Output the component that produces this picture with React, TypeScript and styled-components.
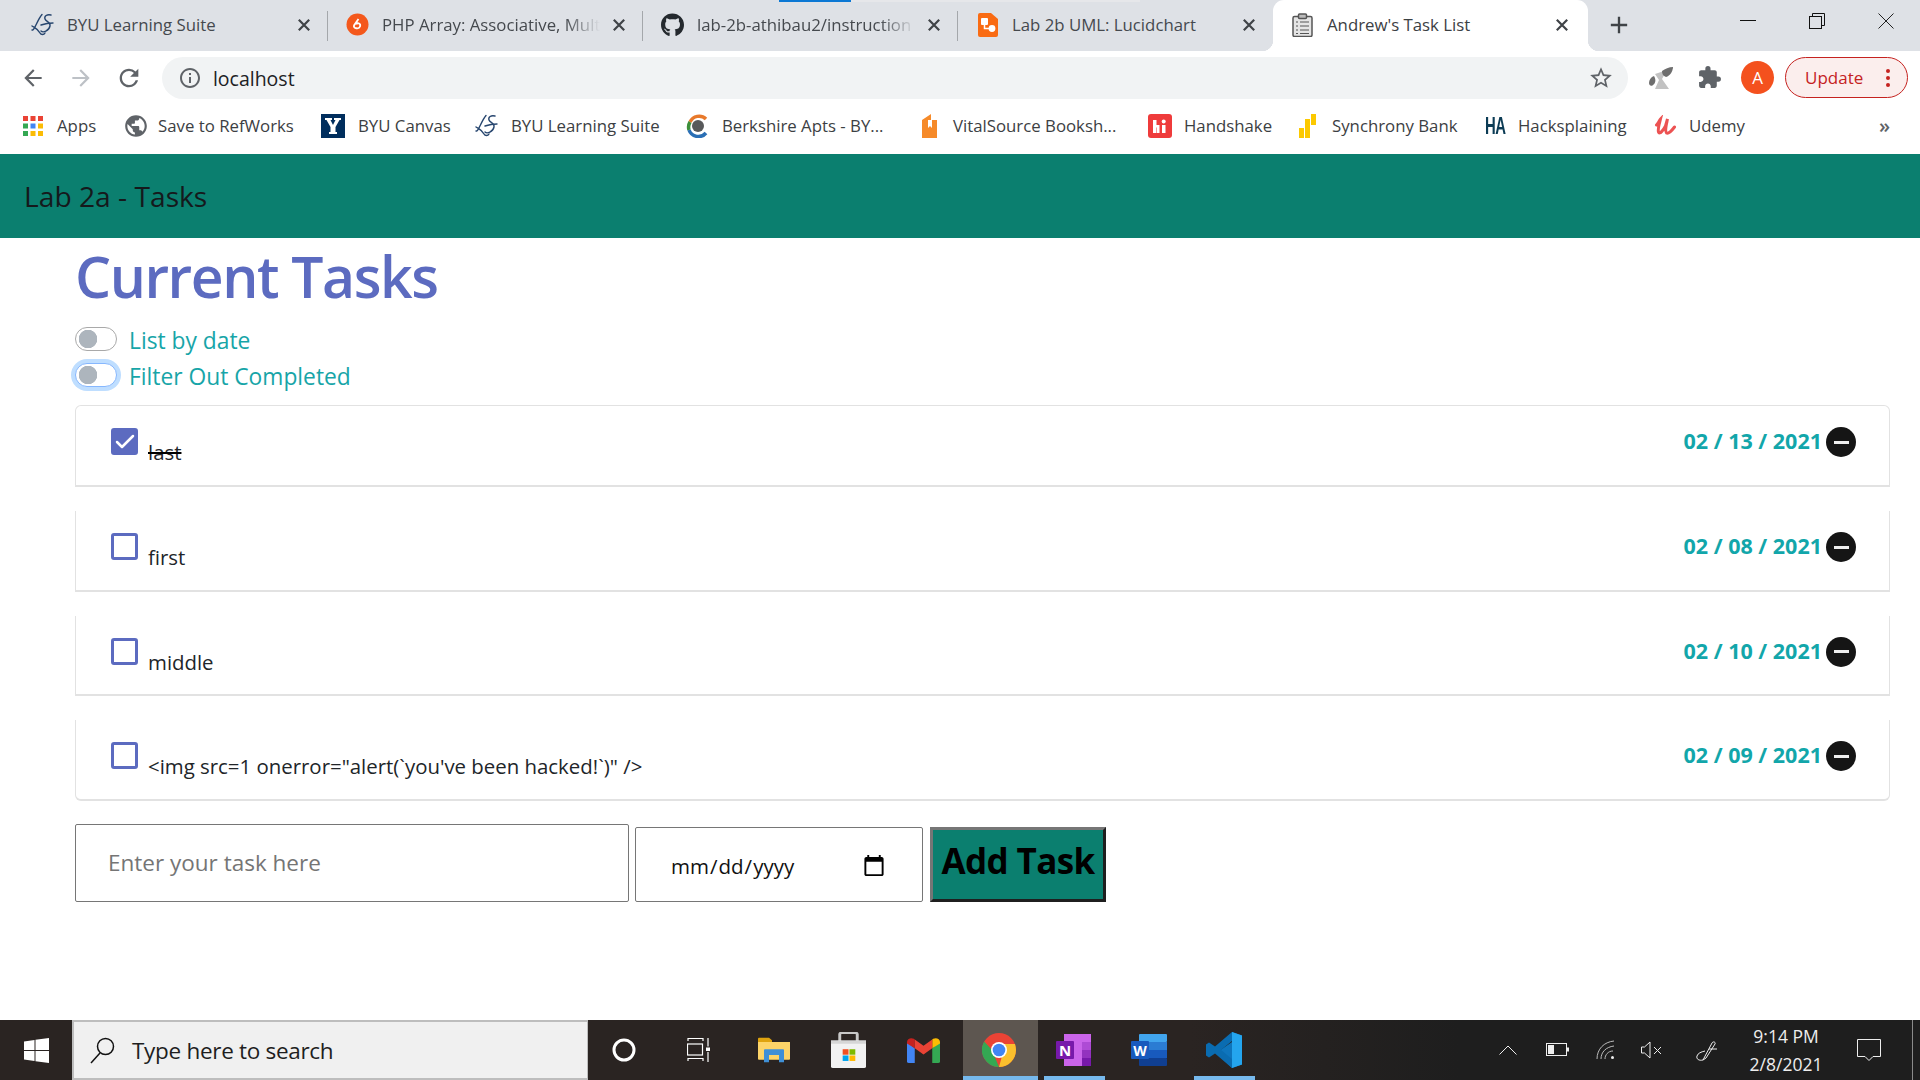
import React, { FC, ReactNode } from 'react';
import styled, { createGlobalStyle } from 'styled-components';
import { Check } from 'lucide-react';
import { FaGithub } from 'react-icons/fa';
import {
  MdAdd,
  MdArrowBack,
  MdArrowForward,
  MdExtension,
  MdInfoOutline,
  MdPublic,
  MdRefresh,
  MdStarBorder,
} from 'react-icons/md';

const uiFont = `"Open Sans", "Noto Sans", "Liberation Sans", sans-serif`;

const GlobalStyle = createGlobalStyle`
  html, body {
    margin: 0;
    padding: 0;
    background: #fff;
    font-family: ${uiFont};
  }
  * {
    box-sizing: border-box;
  }
`;

const Page = styled.div`
  position: relative;
  width: 1920px;
  height: 1080px;
  overflow: hidden;
  display: flex;
  flex-direction: column;
`;

/* ---------- browser chrome ---------- */

const TabStrip = styled.div`
  height: 51px;
  flex: none;
  display: flex;
  align-items: stretch;
  padding-left: 13px;
  background: #dee1e6;
`;

const LoadBar = styled.div`
  position: absolute;
  top: 0;
  left: 779px;
  width: 361px;
  height: 2px;
  background: linear-gradient(90deg, #0b78d4 0, #0b78d4 72px, #e6e7ea 72px, #e6e7ea 100%);
`;

const Tab = styled.div<{ $active?: boolean; $divider?: boolean }>`
  position: relative;
  width: 315px;
  display: flex;
  align-items: center;
  gap: 13px;
  padding: 0 ${(p) => (p.$active ? 20 : 18)}px 2px 18px;
  font-size: 16.8px;
  color: ${(p) => (p.$active ? '#3c4043' : '#45494e')};
  background: ${(p) => (p.$active ? '#fff' : 'transparent')};
  border-radius: ${(p) => (p.$active ? '11px 11px 0 0' : '0')};

  &::after {
    content: '';
    display: ${(p) => (p.$divider ? 'block' : 'none')};
    position: absolute;
    right: 0;
    top: 11px;
    width: 1px;
    height: 30px;
    background: #a4a7ab;
  }

  ${(p) =>
    p.$active &&
    `
    &::before {
      content: '';
      position: absolute;
      left: -11px;
      right: -11px;
      bottom: 0;
      height: 11px;
      background:
        radial-gradient(circle at 0 0, #dee1e6 11px, #fff 11.5px) left bottom / 11px 11px no-repeat,
        radial-gradient(circle at 100% 0, #dee1e6 11px, #fff 11.5px) right bottom / 11px 11px no-repeat;
    }
  `}
`;

const TabIcon = styled.span`
  width: 23px;
  height: 24px;
  flex: none;
  display: flex;
  align-items: center;
  justify-content: center;
`;

const TabTitle = styled.span<{ $fade?: boolean }>`
  flex: 1;
  min-width: 0;
  white-space: nowrap;
  overflow: hidden;
  ${(p) =>
    p.$fade &&
    `-webkit-mask-image: linear-gradient(90deg, #000 84%, transparent 100%);
     mask-image: linear-gradient(90deg, #000 84%, transparent 100%);`}
`;

const TabClose = styled.span`
  flex: none;
  display: flex;
`;

const NewTab = styled.span`
  margin-left: 14px;
  width: 34px;
  display: flex;
  align-items: center;
  justify-content: center;
  padding-bottom: 2px;
  color: #3f4347;
`;

const WindowControls = styled.div`
  margin-left: auto;
  display: flex;
`;

const WindowButton = styled.span`
  width: 69px;
  height: 42px;
  display: flex;
  align-items: center;
  justify-content: center;
`;

const Toolbar = styled.div`
  height: 51px;
  flex: none;
  display: flex;
  align-items: center;
  padding: 2px 12px 0 9px;
  background: #fff;
`;

const NavButton = styled.span<{ $dim?: boolean }>`
  width: 48px;
  display: flex;
  justify-content: center;
  color: ${(p) => (p.$dim ? '#bdc1c6' : '#5f6368')};
`;

const AddressBar = styled.div`
  margin-left: 9px;
  width: 1467px;
  height: 42px;
  display: flex;
  align-items: center;
  gap: 11px;
  padding: 0 14px 0 16px;
  border-radius: 21px;
  background: #f1f3f4;
  color: #5f6368;
`;

const AddressText = styled.span`
  flex: 1;
  padding-top: 2px;
  font-size: 19.5px;
  color: #202124;
`;

const ToolIcon = styled.span<{ $gap: number }>`
  width: 48px;
  margin-left: ${(p) => p.$gap}px;
  display: flex;
  justify-content: center;
  color: #5f6368;
`;

const Avatar = styled.span`
  width: 33px;
  height: 33px;
  margin-left: 8px;
  flex: none;
  display: flex;
  align-items: center;
  justify-content: center;
  border-radius: 50%;
  background: #f4511e;
  color: #fff;
  font-size: 17px;
`;

const UpdatePill = styled.div`
  margin-left: 11px;
  width: 123px;
  height: 41px;
  display: flex;
  align-items: center;
  justify-content: space-between;
  padding: 0 17px 0 19px;
  border: 1.5px solid #c5221f;
  border-radius: 21px;
  background: #fbeeed;
  color: #c5221f;
  font-size: 17px;
`;

const Dots = styled.span`
  width: 4px;
  height: 4px;
  border-radius: 50%;
  background: #c5221f;
  box-shadow: 0 -7px 0 #c5221f, 0 7px 0 #c5221f;
`;

const BookmarkBar = styled.div`
  height: 52px;
  flex: none;
  display: flex;
  align-items: center;
  padding: 0 0 5px 23px;
  background: #fff;
  font-size: 16.8px;
  color: #3c4043;
`;

const Bookmark = styled.div<{ $width: number }>`
  width: ${(p) => p.$width}px;
  flex: none;
  display: flex;
  align-items: center;
  white-space: nowrap;
`;

const BookmarkIcon = styled.span<{ $width: number }>`
  width: ${(p) => p.$width}px;
  flex: none;
  display: flex;
  align-items: center;
`;

const HackLogo = styled.span`
  font-family: "Liberation Sans", sans-serif;
  font-weight: 700;
  font-size: 24px;
  line-height: 24px;
  letter-spacing: -1px;
  transform: scaleX(0.62);
  transform-origin: left center;
  color: #0c3c55;
`;

const MoreBookmarks = styled.span`
  margin-left: 124px;
  color: #5f6368;
  font-size: 20px;
  font-weight: 600;
`;

/* ---------- the app itself ---------- */

const NavBar = styled.div`
  height: 84px;
  flex: none;
  display: flex;
  align-items: center;
  padding-left: 24px;
  background: #0b7f6f;
  color: #15191c;
  font-size: 28.2px;
`;

const Main = styled.main`
  flex: 1;
  min-height: 0;
  padding: 0 30px 0 75px;
`;

const Heading = styled.h1`
  margin: 0 0 8px;
  font-size: 57px;
  line-height: 76px;
  font-weight: 600;
  letter-spacing: -1.45px;
  color: #5c6bc0;
`;

const SwitchRow = styled.label`
  height: 36px;
  display: flex;
  align-items: center;
  gap: 12px;
  font-size: 22.8px;
  color: #17a5a8;
`;

const Switch = styled.input.attrs({ type: 'checkbox' })<{ $focused?: boolean }>`
  appearance: none;
  width: 42px;
  height: 24px;
  margin: 0 0 2px;
  flex: none;
  border: 1px solid ${(p) => (p.$focused ? '#86b7fe' : '#a9a9a9')};
  border-radius: 12px;
  background: radial-gradient(circle at 12px 50%, #adb5bd 9px, transparent 9.5px) #fff;
  box-shadow: ${(p) => (p.$focused ? '0 0 0 4px #bfdeff' : 'none')};
`;

const TaskList = styled.div`
  margin-top: 11px;
`;

const TaskCard = styled.div<{ $first?: boolean; $last?: boolean }>`
  height: ${(p) => (p.$first ? 82 : 80.67)}px;
  margin-top: ${(p) => (p.$first ? 0 : 24)}px;
  display: flex;
  align-items: flex-start;
  justify-content: space-between;
  padding: 22px 33px 0 35px;
  border: 1px solid #e2e2e2;
  border-top-width: ${(p) => (p.$first ? 1 : 0)}px;
  border-bottom-width: 2px;
  border-radius: ${(p) => (p.$first ? '6px 6px 0 0' : p.$last ? '0 0 6px 6px' : '0')};
`;

const TaskMain = styled.div`
  display: flex;
  align-items: flex-start;
`;

const CheckBox = styled.span<{ $checked?: boolean }>`
  width: 27px;
  height: 27px;
  flex: none;
  display: flex;
  align-items: center;
  justify-content: center;
  border: 3px solid #5c6bc0;
  border-radius: 3px;
  background: ${(p) => (p.$checked ? '#5c6bc0' : '#fff')};
  color: #fff;

  svg {
    flex: none;
  }
`;

const TaskText = styled.span<{ $done?: boolean }>`
  margin: 9px 0 0 10px;
  font-size: 20.4px;
  line-height: 30px;
  color: #212529;
  text-decoration: ${(p) => (p.$done ? 'line-through #000 1.5px' : 'none')};
`;

const TaskMeta = styled.div`
  margin-top: -1px;
  display: flex;
  align-items: flex-start;
  gap: 4px;
`;

const TaskDate = styled.span`
  font-size: 21.5px;
  line-height: 28px;
  font-weight: 700;
  color: #12a6aa;
`;

const RemoveButton = styled.span`
  width: 30px;
  height: 30px;
  display: flex;
  align-items: center;
  justify-content: center;
  border-radius: 50%;
  background: #151515;

  &::after {
    content: '';
    width: 15px;
    height: 3px;
    background: #eee;
  }
`;

const AddForm = styled.form`
  margin-top: 23px;
  display: flex;
  align-items: flex-end;
  gap: 6px;
`;

const TaskInput = styled.input`
  width: 554px;
  height: 78px;
  padding: 0 32px;
  border: 1px solid #767676;
  border-radius: 2px;
  font-family: ${uiFont};
  font-size: 22.5px;

  &::placeholder {
    color: #757575;
    opacity: 1;
  }
`;

const DateInput = styled.input`
  width: 288px;
  height: 75px;
  padding: 4px 36px 0 34px;
  border: 1px solid #767676;
  border-radius: 2px;
  background: #fff;
  font-family: ${uiFont};
  font-size: 20.5px;
  color: #111;

  &::-webkit-calendar-picker-indicator {
    width: 24px;
    height: 24px;
    padding: 0;
    margin: 0;
  }
`;

const AddButton = styled.button`
  width: 176px;
  height: 75px;
  margin-left: 1px;
  padding: 0 0 8px;
  border: 3px solid;
  border-color: #767676 #1f1f1f #1f1f1f #767676;
  background: #0b7f6f;
  color: #000;
  font-family: ${uiFont};
  font-size: 35px;
  font-weight: 700;
  letter-spacing: -0.6px;
  white-space: nowrap;
`;

/* ---------- windows taskbar ---------- */

const Taskbar = styled.footer`
  height: 60px;
  flex: none;
  display: flex;
  align-items: stretch;
  background: linear-gradient(90deg, #2a2422 0, #2a2422 62%, #1e1e1e 76%, #1e1e1e 100%);
`;

const StartButton = styled.div`
  width: 72px;
  flex: none;
  display: flex;
  align-items: center;
  justify-content: center;
`;

const SearchBox = styled.div`
  width: 516px;
  flex: none;
  display: flex;
  align-items: center;
  gap: 17px;
  padding-left: 16px;
  border: 2px solid #bdbdbd;
  border-right-width: 1px;
  background: #f0f0f0;
  color: #1e1e1e;
  font-size: 22.5px;
  letter-spacing: -0.3px;
`;

const TaskSlot = styled.div<{ $active?: boolean; $bar?: 'full' | 'inset' }>`
  position: relative;
  width: 75px;
  flex: none;
  display: flex;
  align-items: center;
  justify-content: center;
  padding-right: 4px;
  background: ${(p) => (p.$active ? '#5d5650' : 'transparent')};

  &::after {
    content: '';
    display: ${(p) => (p.$bar ? 'block' : 'none')};
    position: absolute;
    bottom: 0;
    left: ${(p) => (p.$bar === 'inset' ? 6 : 0)}px;
    right: ${(p) => (p.$bar === 'inset' ? 8 : 0)}px;
    height: 4px;
    background: #76b9ed;
  }
`;

const Tray = styled.div`
  margin-left: auto;
  display: flex;
  align-items: center;
  color: #eee;
`;

const TrayIcon = styled.span<{ $width: number }>`
  width: ${(p) => p.$width}px;
  display: flex;
  justify-content: center;
`;

const Clock = styled.div`
  width: 96px;
  display: flex;
  flex-direction: column;
  align-items: center;
  gap: 4px;
  font-size: 17.5px;
  line-height: 24px;
  color: #eee;
`;

const DesktopEdge = styled.div`
  width: 8px;
  align-self: stretch;
  margin-left: 8px;
  border-left: 1px solid #8a8a8a;
`;

/* ---------- logos and favicons ---------- */

const LsLogo: FC = () => (
  <svg width="23" height="23" viewBox="0 0 23 23" fill="none" stroke="#27466f" strokeWidth="1.4" strokeLinecap="round">
    <path d="M11 1.5C8 5 6 10 4 14c-1 2-2.5 3.5-3 3 M1 13c3 2 6 3 8 7 1 2 4 2 5 0" />
    <path d="M20 2c-4-1-7 1-6 4 1 3 6 3 5 7-1 5-7 7-9 5" />
    <path d="M10 12c3-1 8-2 12-2" />
  </svg>
);

const PhpLogo: FC = () => (
  <svg width="23" height="23" viewBox="0 0 23 23">
    <circle cx="11.5" cy="11.5" r="11" fill="#f4581c" />
    <path d="M12.5 6 8 12.5c-1 3 5 4 6 1s-2-4-4-2.5" fill="none" stroke="#fff" strokeWidth="1.8" />
  </svg>
);

const LucidLogo: FC = () => (
  <svg width="20" height="24" viewBox="0 0 20 24">
    <path d="M2 0h11l7 6v16a2 2 0 0 1-2 2H2a2 2 0 0 1-2-2V2a2 2 0 0 1 2-2z" fill="#f96b13" />
    <rect x="3" y="5" width="7" height="7" rx="1" fill="#fff" />
    <circle cx="14" cy="15.500" r="3.400" fill="#fff" />
    <path d="M6.500 11v4.500h6" stroke="#fff" strokeWidth="1.500" fill="none" />
  </svg>
);

const ClipboardLogo: FC = () => (
  <svg width="21" height="24" viewBox="0 0 21 24" fill="none" stroke="#555" strokeWidth="1.5">
    <rect x="1" y="3.5" width="19" height="20" rx="1.5" fill="#e4e4e4" />
    <rect x="6.5" y="1" width="8" height="4.5" rx="1" fill="#bbb" />
    <path d="M4 9h2M8 9h9M4 13h2M8 13h9M4 17h2M8 17h9M4 20.5h2M8 20.5h9" strokeWidth="1.2" />
  </svg>
);

const CloseMark: FC = () => (
  <svg width="12" height="12" viewBox="0 0 12 12" stroke="#3f4347" strokeWidth="2.200">
    <path d="M.8.800l10.400 10.400M11.200.800.800 11.200" />
  </svg>
);

const AppsGrid: FC = () => (
  <svg width="20" height="20" viewBox="0 0 20 20">
    {['#ea4335', '#ea4335', '#ea4335', '#34a853', '#4285f4', '#fbbc05', '#34a853', '#fbbc05', '#fbbc05'].map((c, i) => (
      <rect key={i} x={(i % 3) * 7.5} y={Math.floor(i / 3) * 7.5} width="5" height="5" fill={c} />
    ))}
  </svg>
);

const ByuLogo: FC = () => (
  <svg width="24" height="24" viewBox="0 0 24 24">
    <rect width="24" height="24" fill="#002e5d" />
    <path d="M4 4h7v2H9.500l2.500 5 2.500-5H13V4h7v2h-1.500L14.500 13v5H16v2H8v-2h1.500v-5L5.500 6H4z" fill="#fff" />
  </svg>
);

const BerkshireLogo: FC = () => (
  <svg width="24" height="24" viewBox="0 0 24 24" fill="none" strokeWidth="3.5">
    <path d="M4 8a10 10 0 0 1 16-3" stroke="#e8792b" />
    <path d="M3 16a10 10 0 0 1 1-8" stroke="#3d8f3a" />
    <path d="M20 19a10 10 0 0 1-17-3" stroke="#2a6fb5" />
    <circle cx="12" cy="12" r="6" fill="#58595b" stroke="none" />
  </svg>
);

const VitalLogo: FC = () => (
  <svg width="15" height="24" viewBox="0 0 15 24">
    <path d="M0 6l9-6v6h6v18H0z" fill="#f68a29" />
    <path d="M6 6h4v8l-2-2-2 2z" fill="#fff" />
  </svg>
);

const HandshakeLogo: FC = () => (
  <svg width="24" height="24" viewBox="0 0 24 24">
    <rect width="24" height="24" rx="3" fill="#ef3b3b" />
    <path d="M5 6h3.500v5h3v8H9v-5.500H8.500V19H5zM14 11h3.500v8H14z" fill="#fff" />
    <circle cx="15.700" cy="7.500" r="2" fill="#fff" />
  </svg>
);

const SynchronyLogo: FC = () => (
  <svg width="17" height="24" viewBox="0 0 17 24" fill="#fcc900">
    <rect x="0" y="14" width="5" height="10" />
    <rect x="6" y="5" width="5" height="19" />
    <rect x="12" y="0" width="5" height="11" />
  </svg>
);

const UdemyLogo: FC = () => (
  <svg width="22" height="22" viewBox="0 0 22 22" fill="none" stroke="#ec5252" strokeWidth="3" strokeLinecap="round">
    <path d="M1.500 10c3-3 3-5 4-6-1 4-3 10-2 13 1 3 5-2 7-6l2-7c-1 5-3 12-1 14 2 1 5-2 8-6" />
  </svg>
);

const DogExtension: FC = () => (
  <svg width="24" height="22" viewBox="0 0 24 22">
    <path d="M6 7 18 3l-5 9 7 10H6l4-9z" fill="#c2c2c2" />
    <path d="M13 4c3-2 7-4 11-4 0 4-3 9-7 10-3-1-4-3-4-6z" fill="#6e6e6e" />
    <path d="M5 9c-3 1-5 4-5 7 0 2 2 4 4 2 3-2 3-6 1-9z" fill="#6e6e6e" />
  </svg>
);

const RestoreGlyph: FC = () => (
  <svg width="16" height="16" viewBox="0 0 16 16" fill="none" stroke="#111" strokeWidth="1">
    <rect x="0.500" y="3.500" width="12" height="12" fill="#dee1e6" />
    <path d="M3.500 3.500v-3h12v12h-3" />
  </svg>
);

const MinimizeGlyph: FC = () => (
  <svg width="16" height="2" viewBox="0 0 16 2">
    <rect width="16" height="1" fill="#111" />
  </svg>
);

const CloseGlyph: FC = () => (
  <svg width="16" height="16" viewBox="0 0 16 16" stroke="#222" strokeWidth="1">
    <path d="M.5.500l15 15M15.500.500l-15 15" />
  </svg>
);

const WindowsLogo: FC = () => (
  <svg width="25" height="25" viewBox="0 0 25 25" fill="#fff">
    <path d="M0 3.500 10.500 2v10H0zM11.500 1.800 25 0v12H11.500zM0 13h10.500v10L0 21.500zM11.500 13H25v12l-13.500-1.800z" />
  </svg>
);

const Magnifier: FC = () => (
  <svg width="25" height="27" viewBox="0 0 25 27" fill="none" stroke="#111" strokeWidth="1.5">
    <circle cx="15.500" cy="9.500" r="8" />
    <path d="M10 16 1 26" />
  </svg>
);

const Cortana: FC = () => (
  <svg width="24" height="24" viewBox="0 0 24 24" fill="none" stroke="#fff" strokeWidth="3">
    <circle cx="12" cy="12" r="10" />
  </svg>
);

const TaskView: FC = () => (
  <svg width="24" height="24" viewBox="0 0 24 24" fill="none" stroke="#fff" strokeWidth="1.200">
    <path d="M1 3V.5h15V3M1 23v-2.500h15V23" />
    <rect x="0.500" y="6" width="15" height="11" />
    <path d="M21 0v8.500M21 14v10" />
    <rect x="19" y="9.500" width="4" height="3.500" fill="#fff" stroke="none" />
  </svg>
);

const Explorer: FC = () => (
  <svg width="32" height="26" viewBox="0 0 32 32" preserveAspectRatio="none">
    <path d="M0 2a1 1 0 0 1 1-1h10l3 3v4H0z" fill="#dfa30f" />
    <path d="M0 6h32v21a1 1 0 0 1-1 1H1a1 1 0 0 1-1-1z" fill="#fdd468" />
    <path d="M6 16a1 1 0 0 1 1-1h18a1 1 0 0 1 1 1v15h-5v-9H11v9H6z" fill="#3f8fd6" />
  </svg>
);

const StoreBag: FC = () => (
  <svg width="35" height="36" viewBox="0 0 36 46" preserveAspectRatio="none">
    <path d="M9 12V3a2 2 0 0 1 2-2h14a2 2 0 0 1 2 2v9" fill="none" stroke="#c8c8c8" strokeWidth="3" />
    <path d="M0 11h36v33a2 2 0 0 1-2 2H2a2 2 0 0 1-2-2z" fill="#f2f2f2" />
    <rect x="0" y="11" width="36" height="4" fill="#d6d6d6" />
    <rect x="12" y="22" width="6" height="7" fill="#f25022" />
    <rect x="19" y="22" width="6" height="7" fill="#7fba00" />
    <rect x="12" y="30" width="6" height="7" fill="#00a4ef" />
    <rect x="19" y="30" width="6" height="7" fill="#ffb900" />
  </svg>
);

const GmailLogo: FC = () => (
  <svg width="33" height="25" viewBox="0 0 34 32" preserveAspectRatio="none">
    <path d="M0 5v25a2 2 0 0 0 2 2h6V13z" fill="#4285f4" />
    <path d="M34 5v25a2 2 0 0 1-2 2h-6V13z" fill="#34a853" />
    <path d="M0 5c0-4 4-6 7-4l1 1v11L0 7z" fill="#c5221f" />
    <path d="M34 5c0-4-4-6-7-4l-1 1v11l8-6z" fill="#fbbc04" />
    <path d="M8 2l9 8 9-8v11l-9 8-9-8z" fill="#ea4335" />
  </svg>
);

const ChromeLogo: FC = () => (
  <svg width="34" height="34" viewBox="0 0 34 34">
    <circle cx="17" cy="17" r="17" fill="#ea4335" />
    <path d="M17 34A17 17 0 0 1 2.200 8.500L10 17l7 17z" fill="#34a853" />
    <path d="M17 34c9.500 0 17-7.500 17-17 0-2-.4-4-1-6H17l3 12z" fill="#fbc02d" />
    <circle cx="17" cy="17" r="8" fill="#fff" />
    <circle cx="17" cy="17" r="6.300" fill="#4285f4" />
  </svg>
);

const OneNoteLogo: FC = () => (
  <svg width="35" height="32" viewBox="0 0 35 32">
    <rect x="8" y="0" width="27" height="32" fill="#ca64ea" />
    <rect x="26" y="8" width="9" height="8" fill="#ae4bd5" />
    <rect x="26" y="16" width="9" height="8" fill="#9332bf" />
    <rect x="26" y="24" width="9" height="8" fill="#7719aa" />
    <rect x="0" y="7" width="18" height="18" rx="1" fill="#7719aa" />
    <text x="9" y="21.500" textAnchor="middle" fontSize="15" fontWeight="700" fill="#fff" fontFamily="Open Sans, sans-serif">N</text>
  </svg>
);

const WordLogo: FC = () => (
  <svg width="36" height="32" viewBox="0 0 36 32">
    <rect x="8" y="0" width="28" height="8" rx="1" fill="#41a5ee" />
    <rect x="8" y="8" width="28" height="8" fill="#2b7cd3" />
    <rect x="8" y="16" width="28" height="8" fill="#185abd" />
    <rect x="8" y="24" width="28" height="8" rx="1" fill="#103f91" />
    <rect x="0" y="7" width="18" height="18" rx="1" fill="#185abd" />
    <text x="9" y="21.500" textAnchor="middle" fontSize="14" fontWeight="700" fill="#fff" fontFamily="Open Sans, sans-serif">W</text>
  </svg>
);

const VsCodeLogo: FC = () => (
  <svg width="36" height="36" viewBox="0 0 36 36">
    <path d="M26 0 36 3.500v29L26 36l-16-15 16-11z" fill="#0e75bd" />
    <path d="M26 0 36 3.500v29L26 36z" fill="#24a5ee" />
    <path d="M26 0 9 14.500 3 10.500 0 12.500v11l3 2 6-4 17 14.500v-9L15 18l11-9z" fill="#0a6cb1" />
  </svg>
);

const BatteryGlyph: FC = () => (
  <svg width="23" height="14" viewBox="0 0 23 14" fill="none" stroke="#eee" strokeWidth="1">
    <rect x="0.500" y="0.500" width="20" height="12" />
    <rect x="2" y="2" width="6" height="9" fill="#eee" stroke="none" />
    <rect x="21" y="4.500" width="2" height="4" fill="#eee" stroke="none" />
  </svg>
);

const WifiGlyph: FC = () => (
  <svg width="20" height="20" viewBox="0 0 20 20" fill="none" stroke="#bbb" strokeWidth="1">
    <path d="M1 19C1 9 8 2 18 1M5 19c0-7 5-12 13-13M9 19c0-4 3-8 8-8" />
    <circle cx="16.500" cy="17.500" r="1.500" fill="#eee" stroke="none" />
  </svg>
);

const VolumeGlyph: FC = () => (
  <svg width="22" height="18" viewBox="0 0 22 18" fill="none" stroke="#eee" strokeWidth="1">
    <path d="M.5 6h3L9 1v16l-5.500-5h-3zM13 6l7 7M20 6l-7 7" />
  </svg>
);

const PenGlyph: FC = () => (
  <svg width="22" height="21" viewBox="0 0 22 21" fill="none" stroke="#eee" strokeWidth="1">
    <path d="M7 20c-4 1-7-1-6-4s4-4 8-5M7 20l9-17c1-2 4-1 3 1l-9 14-3 2zM13 9l8 0" />
  </svg>
);

const NotifyGlyph: FC = () => (
  <svg width="24" height="24" viewBox="0 0 24 24" fill="none" stroke="#eee" strokeWidth="1">
    <path d="M.5 1.500h23v17H16l-4 4-4-4H.5z" />
  </svg>
);

const Caret: FC = () => (
  <svg width="18" height="10" viewBox="0 0 18 10" fill="none" stroke="#eee" strokeWidth="1">
    <path d="M.5 9.500 9 1l8.500 8.500" />
  </svg>
);

/* ---------- data ---------- */

interface TabData {
  title: string;
  icon: ReactNode;
  fade?: boolean;
}

const tabs: TabData[] = [
  { title: 'BYU Learning Suite', icon: <LsLogo /> },
  { title: 'PHP Array: Associative, Mult', icon: <PhpLogo />, fade: true },
  { title: 'lab-2b-athibau2/instruction', icon: <FaGithub size={24} color="#24292e" />, fade: true },
  { title: 'Lab 2b UML: Lucidchart', icon: <LucidLogo /> },
];

interface BookmarkData {
  title: string;
  icon: ReactNode;
  iconWidth: number;
  width: number;
}

const bookmarks: BookmarkData[] = [
  { title: 'Apps', icon: <AppsGrid />, iconWidth: 34, width: 100 },
  { title: 'Save to RefWorks', icon: <MdPublic size={26} color="#5f6368" />, iconWidth: 35, width: 198 },
  { title: 'BYU Canvas', icon: <ByuLogo />, iconWidth: 37, width: 154 },
  { title: 'BYU Learning Suite', icon: <LsLogo />, iconWidth: 36, width: 211 },
  { title: 'Berkshire Apts - BY...', icon: <BerkshireLogo />, iconWidth: 36, width: 236 },
  { title: 'VitalSource Booksh...', icon: <VitalLogo />, iconWidth: 31, width: 226 },
  { title: 'Handshake', icon: <HandshakeLogo />, iconWidth: 36, width: 151 },
  { title: 'Synchrony Bank', icon: <SynchronyLogo />, iconWidth: 33, width: 186 },
  { title: 'Hacksplaining', icon: <HackLogo>HA</HackLogo>, iconWidth: 33, width: 170 },
  { title: 'Udemy', icon: <UdemyLogo />, iconWidth: 34, width: 100 },
];

const tasks = [
  { text: 'last', date: '02 / 13 / 2021', done: true },
  { text: 'first', date: '02 / 08 / 2021', done: false },
  { text: 'middle', date: '02 / 10 / 2021', done: false },
  { text: '<img src=1 onerror="alert(`you\'ve been hacked!`)" />', date: '02 / 09 / 2021', done: false },
];

const App: FC = () => {
  return (
    <Page>
      <GlobalStyle />
      <TabStrip>
        {tabs.map((tab, i) => (
          <Tab key={tab.title} $divider={i < 3}>
            <TabIcon>{tab.icon}</TabIcon>
            <TabTitle $fade={tab.fade}>{tab.title}</TabTitle>
            <TabClose>
              <CloseMark />
            </TabClose>
          </Tab>
        ))}
        <Tab $active>
          <TabIcon>
            <ClipboardLogo />
          </TabIcon>
          <TabTitle>Andrew's Task List</TabTitle>
          <TabClose>
            <CloseMark />
          </TabClose>
        </Tab>
        <NewTab>
          <MdAdd size={28} />
        </NewTab>
        <WindowControls>
          <WindowButton>
            <MinimizeGlyph />
          </WindowButton>
          <WindowButton>
            <RestoreGlyph />
          </WindowButton>
          <WindowButton>
            <CloseGlyph />
          </WindowButton>
        </WindowControls>
      </TabStrip>
      <LoadBar />
      <Toolbar>
        <NavButton>
          <MdArrowBack size={26} />
        </NavButton>
        <NavButton $dim>
          <MdArrowForward size={26} />
        </NavButton>
        <NavButton>
          <MdRefresh size={28} />
        </NavButton>
        <AddressBar>
          <MdInfoOutline size={24} />
          <AddressText>localhost</AddressText>
          <MdStarBorder size={26} />
        </AddressBar>
        <ToolIcon $gap={9}>
          <DogExtension />
        </ToolIcon>
        <ToolIcon $gap={0}>
          <MdExtension size={25} />
        </ToolIcon>
        <Avatar>A</Avatar>
        <UpdatePill>
          Update
          <Dots />
        </UpdatePill>
      </Toolbar>
      <BookmarkBar>
        {bookmarks.map((b) => (
          <Bookmark key={b.title} $width={b.width}>
            <BookmarkIcon $width={b.iconWidth}>{b.icon}</BookmarkIcon>
            {b.title}
          </Bookmark>
        ))}
        <MoreBookmarks>»</MoreBookmarks>
      </BookmarkBar>
      <NavBar>Lab 2a - Tasks</NavBar>
      <Main>
        <Heading>Current Tasks</Heading>
        <SwitchRow>
          <Switch />
          List by date
        </SwitchRow>
        <SwitchRow>
          <Switch $focused />
          Filter Out Completed
        </SwitchRow>
        <TaskList>
          {tasks.map((task, i) => (
            <TaskCard key={task.date} $first={i === 0} $last={i === tasks.length - 1}>
              <TaskMain>
                <CheckBox $checked={task.done}>{task.done && <Check size={24} strokeWidth={2.5} />}</CheckBox>
                <TaskText $done={task.done}>{task.text}</TaskText>
              </TaskMain>
              <TaskMeta>
                <TaskDate>{task.date}</TaskDate>
                <RemoveButton />
              </TaskMeta>
            </TaskCard>
          ))}
        </TaskList>
        <AddForm>
          <TaskInput placeholder="Enter your task here" />
          <DateInput type="date" />
          <AddButton type="button">Add Task</AddButton>
        </AddForm>
      </Main>
      <Taskbar>
        <StartButton>
          <WindowsLogo />
        </StartButton>
        <SearchBox>
          <Magnifier />
          Type here to search
        </SearchBox>
        <TaskSlot>
          <Cortana />
        </TaskSlot>
        <TaskSlot>
          <TaskView />
        </TaskSlot>
        <TaskSlot>
          <Explorer />
        </TaskSlot>
        <TaskSlot>
          <StoreBag />
        </TaskSlot>
        <TaskSlot>
          <GmailLogo />
        </TaskSlot>
        <TaskSlot $active $bar="full">
          <ChromeLogo />
        </TaskSlot>
        <TaskSlot $bar="inset">
          <OneNoteLogo />
        </TaskSlot>
        <TaskSlot>
          <WordLogo />
        </TaskSlot>
        <TaskSlot $bar="inset">
          <VsCodeLogo />
        </TaskSlot>
        <Tray>
          <TrayIcon $width={45}>
            <Caret />
          </TrayIcon>
          <TrayIcon $width={54}>
            <BatteryGlyph />
          </TrayIcon>
          <TrayIcon $width={44}>
            <WifiGlyph />
          </TrayIcon>
          <TrayIcon $width={48}>
            <VolumeGlyph />
          </TrayIcon>
          <TrayIcon $width={62}>
            <PenGlyph />
          </TrayIcon>
          <Clock>
            <span>9:14 PM</span>
            <span>2/8/2021</span>
          </Clock>
          <TrayIcon $width={70}>
            <NotifyGlyph />
          </TrayIcon>
          <DesktopEdge />
        </Tray>
      </Taskbar>
    </Page>
  );
};

export default App;
